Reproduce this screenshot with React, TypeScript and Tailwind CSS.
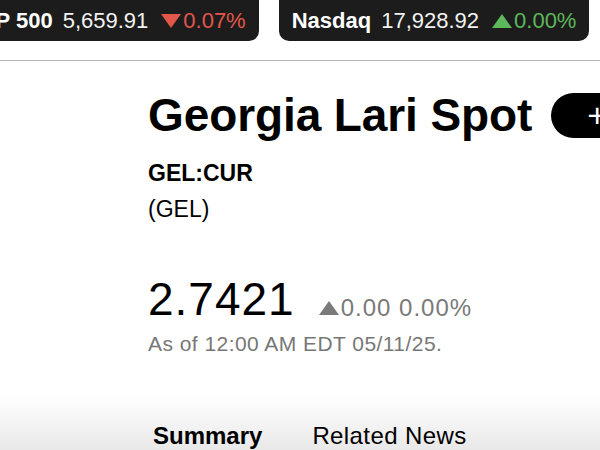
import React from "react";

function Triangle({ up, className }: { up: boolean; className: string }) {
  return (
    <svg viewBox="0 0 20 14" className={className} fill="currentColor">
      {up ? <path d="M10 0 L20 14 L0 14 Z" /> : <path d="M0 0 L20 0 L10 14 Z" />}
    </svg>
  );
}

function TickerPill({
  name,
  value,
  change,
  up,
  className,
}: {
  name: string;
  value: string;
  change: string;
  up: boolean;
  className?: string;
}) {
  const color = up ? "text-[#5cb85a]" : "text-[#e2574a]";
  return (
    <div
      className={`h-[41px] bg-[#1c1c1c] rounded-b-[10px] flex items-center px-[13px] text-[22px] leading-none text-white whitespace-nowrap ${className ?? ""}`}
    >
      <span className="font-bold">{name}</span>
      <span className="ml-[10px] text-[#f2f2f2]">{value}</span>
      <span className={`ml-[13px] flex items-center ${color}`}>
        <Triangle up={up} className="w-[20px] h-[14px] mr-[2px]" />
        <span>{change}</span>
      </span>
    </div>
  );
}

export default function App() {
  return (
    <div className="w-[600px] h-[450px] overflow-hidden bg-white font-['Liberation_Sans',Arial,sans-serif] text-black">
      <header className="h-[61px] border-b border-[#b3b3b3] flex items-start gap-[20px]">
        <TickerPill name="S&P 500" value="5,659.91" change="0.07%" up={false} className="-ml-[48px] shrink-0" />
        <TickerPill name="Nasdaq" value="17,928.92" change="0.00%" up={true} className="shrink-0" />
      </header>

      <main className="pl-[148px]">
        <div className="mt-[31px] flex items-center">
          <h1 className="text-[46px] leading-[46px] font-bold tracking-[-0.1px] whitespace-nowrap">
            Georgia Lari Spot
          </h1>
          <button className="ml-[19px] h-[45px] w-[80px] shrink-0 rounded-full bg-black text-white flex items-center pl-[36px] text-[34px] font-light leading-none">
            +
          </button>
        </div>

        <div className="mt-[22px] text-[23px] leading-[26px] font-bold">GEL:CUR</div>
        <div className="mt-[10px] text-[23px] leading-[26px]">(GEL)</div>

        <div className="mt-[54px] flex items-end">
          <span className="text-[46px] leading-[46px] tracking-[1px]">2.7421</span>
          <span className="ml-[24px] mb-[2px] flex items-center text-[24px] leading-[24px] text-[#7a7a7a] tracking-[1px]">
            <Triangle up={true} className="w-[20px] h-[14px] mr-[2px]" />
            <span>0.00 0.00%</span>
          </span>
        </div>

        <div className="mt-[10px] text-[21px] leading-[24px] text-[#777777] tracking-[0.45px]">
          As of 12:00 AM EDT 05/11/25.
        </div>
      </main>

      <nav className="mt-[40px] h-[60px] bg-gradient-to-b from-white to-[#e6e6e6] flex items-start pt-[28px] pl-[153px] gap-[50px] text-[24px] leading-none whitespace-nowrap">
        <span className="font-bold">Summary</span>
        <span className="tracking-[0.4px]">Related News</span>
      </nav>
    </div>
  );
}
